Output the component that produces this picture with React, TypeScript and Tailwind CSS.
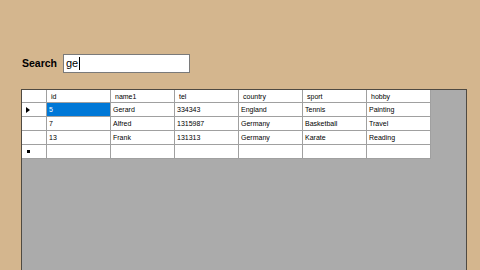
import React from "react";

const columns = ["id", "name1", "tel", "country", "sport", "hobby"];

const rows = [
  ["5", "Gerard", "334343", "England", "Tennis", "Painting"],
  ["7", "Alfred", "1315987", "Germany", "Basketball", "Travel"],
  ["13", "Frank", "131313", "Germany", "Karate", "Reading"],
];

function RowHeader({ kind }: { kind: "current" | "new" | "none" }) {
  return (
    <div className="w-[25px] h-full border-r border-[#a0a0a0] flex items-center pl-[4px] bg-white">
      {kind === "current" && (
        <svg width="4" height="6" viewBox="0 0 4 6">
          <path d="M0 0 L4 3 L0 6 Z" fill="#000" />
        </svg>
      )}
      {kind === "new" && <span className="block w-[3px] h-[3px] bg-black ml-[1px]" />}
    </div>
  );
}

export default function App() {
  return (
    <div
      className="w-[480px] h-[270px] overflow-hidden bg-[#d4b68e] flex flex-col"
      style={{ fontFamily: '"Liberation Sans", Arial, sans-serif' }}
    >
      {/* Search bar */}
      <div className="flex items-center pl-[22px] pt-[54px]">
        <span className="w-[41px] text-[10.5px] font-bold text-black leading-none">Search</span>
        <div className="w-[127px] h-[19px] bg-white border border-[#7a7a7a] flex items-center pl-[2px]">
          <span className="text-[11px] text-black leading-none">ge</span>
          <span className="w-[1px] h-[13px] bg-black ml-[1px]" />
        </div>
      </div>

      {/* Data grid */}
      <div className="ml-[21px] mt-[16px] w-[446px] flex-1 bg-[#ababab] border-l border-t border-r border-[#4f4a42]">
        <div className="w-[409px] text-[7px] text-black leading-none">
          <div className="flex h-[13px] border-b border-[#a0a0a0] bg-white">
            <RowHeader kind="none" />
            {columns.map((c) => (
              <div key={c} className="w-[64px] h-full border-r border-[#a0a0a0] flex items-center pl-[4px]">
                {c}
              </div>
            ))}
          </div>
          {rows.map((r, i) => (
            <div key={i} className="flex h-[14px] border-b border-[#a0a0a0] bg-white">
              <RowHeader kind={i === 0 ? "current" : "none"} />
              {r.map((v, j) => (
                <div
                  key={j}
                  className={`w-[64px] h-full border-r border-[#a0a0a0] flex items-center pl-[2px] ${
                    i === 0 && j === 0 ? "bg-[#0078d7] text-white" : ""
                  }`}
                >
                  {v}
                </div>
              ))}
            </div>
          ))}
          <div className="flex h-[14px] border-b border-[#a0a0a0] bg-white">
            <RowHeader kind="new" />
            {columns.map((c) => (
              <div key={c} className="w-[64px] h-full border-r border-[#a0a0a0]" />
            ))}
          </div>
        </div>
      </div>
    </div>
  );
}
